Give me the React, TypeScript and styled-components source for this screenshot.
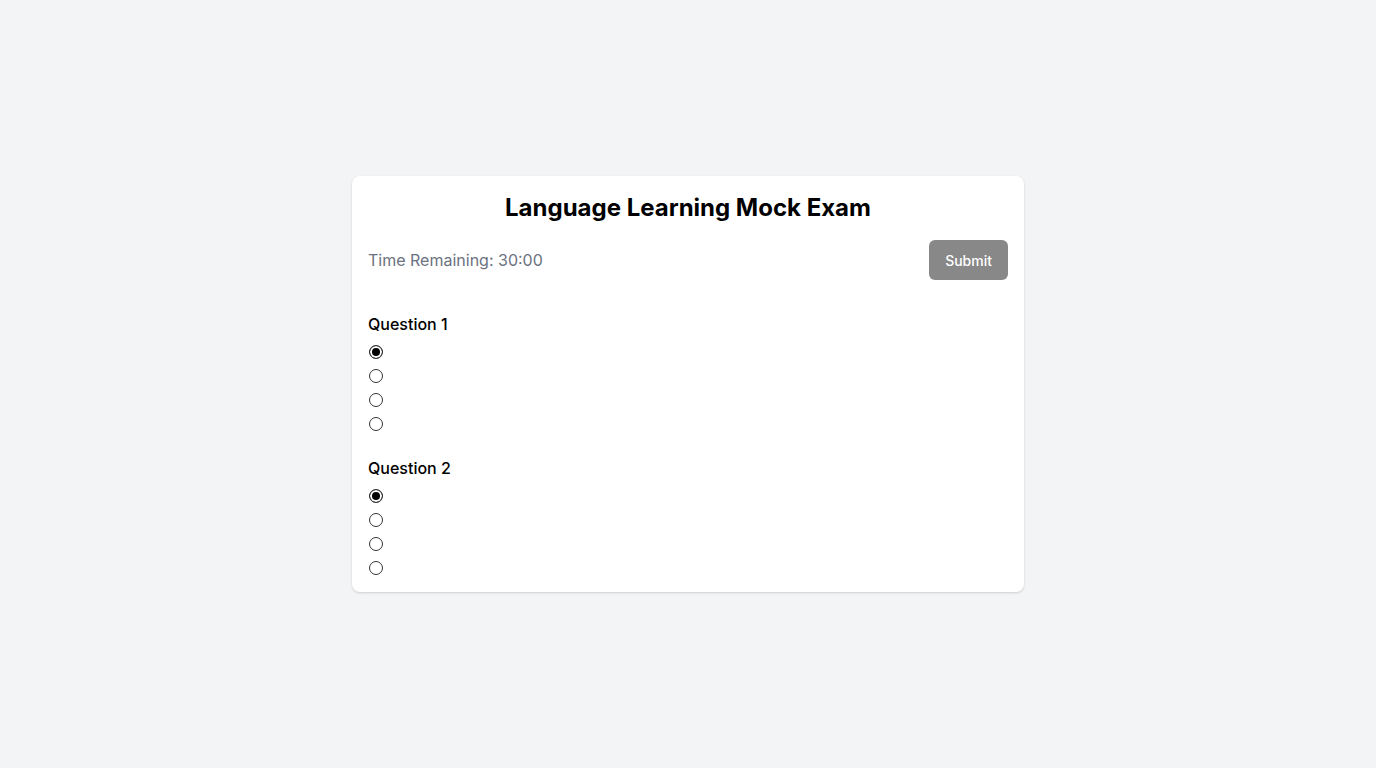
import React, { useState } from "react";
import styled, { createGlobalStyle } from "styled-components";

const GlobalStyle = createGlobalStyle`
  * { box-sizing: border-box; }
  html, body { margin: 0; padding: 0; }
  body {
    background: #f3f4f6;
    font-family: Inter, "Noto Sans", "Liberation Sans", sans-serif;
    color: #111111;
  }
`;

const Page = styled.div`
  min-height: 100vh;
  display: flex;
  align-items: center;
  justify-content: center;
`;

const Card = styled.div`
  width: 672px;
  background: #ffffff;
  border-radius: 8px;
  box-shadow: 0 1px 3px rgba(0, 0, 0, 0.1), 0 1px 2px rgba(0, 0, 0, 0.06);
  padding: 16px 16px 12px;
  display: flex;
  flex-direction: column;
`;

const Title = styled.h1`
  margin: 0;
  font-size: 24px;
  line-height: 32px;
  font-weight: 700;
  text-align: center;
  color: #000000;
`;

const TopRow = styled.div`
  margin-top: 16px;
  height: 40px;
  display: flex;
  align-items: center;
  justify-content: space-between;
`;

const Timer = styled.span`
  font-size: 16px;
  line-height: 24px;
  color: #6b7280;
`;

const SubmitButton = styled.button`
  height: 40px;
  padding: 0 16px;
  border: none;
  border-radius: 6px;
  background: #888888;
  color: #ffffff;
  font-family: inherit;
  font-size: 14px;
  font-weight: 500;
  cursor: pointer;
`;

const Questions = styled.div`
  margin-top: 32px;
  display: flex;
  flex-direction: column;
  gap: 20px;
`;

const QuestionBlock = styled.div`
  display: flex;
  flex-direction: column;
`;

const QuestionLabel = styled.div`
  font-size: 16px;
  line-height: 24px;
  font-weight: 500;
  color: #000000;
  margin-bottom: 4px;
`;

const OptionRow = styled.label`
  height: 24px;
  display: flex;
  align-items: center;
`;

const Radio = styled.input`
  appearance: none;
  -webkit-appearance: none;
  width: 14px;
  height: 14px;
  margin: 0 0 0 1px;
  border-radius: 50%;
  border: 1px solid #333333;
  background: #ffffff;
  cursor: pointer;
  &:checked {
    background: #000000;
    box-shadow: inset 0 0 0 2px #ffffff;
  }
`;

const questions = ["Question 1", "Question 2"];

export default function App() {
  const [answers, setAnswers] = useState<number[]>([0, 0]);
  return (
    <>
      <GlobalStyle />
      <Page>
        <Card>
          <Title>Language Learning Mock Exam</Title>
          <TopRow>
            <Timer>Time Remaining: 30:00</Timer>
            <SubmitButton>Submit</SubmitButton>
          </TopRow>
          <Questions>
            {questions.map((q, qi) => (
              <QuestionBlock key={q}>
                <QuestionLabel>{q}</QuestionLabel>
                {[0, 1, 2, 3].map((oi) => (
                  <OptionRow key={oi}>
                    <Radio
                      type="radio"
                      name={`q${qi}`}
                      checked={answers[qi] === oi}
                      onChange={() =>
                        setAnswers((a) => a.map((v, i) => (i === qi ? oi : v)))
                      }
                    />
                  </OptionRow>
                ))}
              </QuestionBlock>
            ))}
          </Questions>
        </Card>
      </Page>
    </>
  );
}
